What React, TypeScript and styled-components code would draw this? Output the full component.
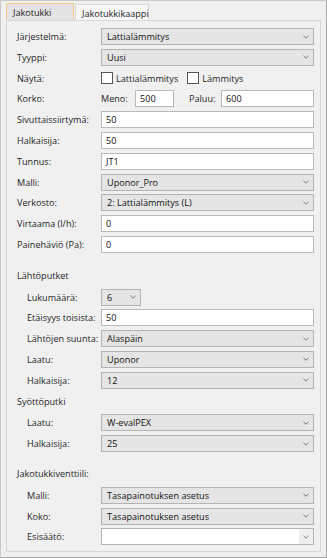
import React from "react";
import styled, { createGlobalStyle } from "styled-components";

const GlobalStyle = createGlobalStyle`
    html, body {
        margin: 0;
        padding: 0;
        background: #ffffff;
    }

    body {
        font-family: "Open Sans", "Noto Sans", sans-serif;
        font-size: 9.1px;
        color: #1e1e1e;
    }
`;

const Frame = styled.div`
    width: 327px;
    height: 558px;
    box-sizing: border-box;
    border: 1px solid #c9c9c9;
    border-right-color: #a8a8a8;
    border-bottom-color: #a8a8a8;
    background: #f0f0f0;
    padding: 2px 5px 5px 5px;
    display: flex;
    flex-direction: column;
`;

const TabBar = styled.div`
    display: flex;
    height: 17px;
    align-items: flex-end;
`;

const Tab = styled.div<{ $active?: boolean }>`
    box-sizing: border-box;
    height: ${(p) => (p.$active ? "17px" : "16px")};
    padding: 1px 6px 0;
    display: flex;
    align-items: center;
    background: ${(p) => (p.$active ? "#e3e3e3" : "#f7f7f7")};
    border: 1px solid ${(p) => (p.$active ? "#f3c98e" : "#d9d9d9")};
    border-bottom: none;
    margin-right: 1px;
    color: #1e1e1e;
    width: ${(p) => (p.$active ? "68px" : "74px")};
`;

const Panel = styled.div`
    flex: 1;
    box-sizing: border-box;
    border: 1px solid #d7d7d7;
    background: #f0f0f0;
    padding: 7px 6px 0 10px;
    display: flex;
    flex-direction: column;
    gap: 3.8px;
`;

const Row = styled.div`
    display: grid;
    grid-template-columns: 84px 1fr;
    height: 17px;
    align-items: center;
`;

const Label = styled.div<{ $indent?: boolean }>`
    padding-left: ${(p) => (p.$indent ? "10px" : "0")};
    white-space: nowrap;
    color: #262626;
`;

const Heading = styled.div<{ $space: number }>`
    height: 18px;
    line-height: 18px;
    margin-top: ${(p) => p.$space}px;
    color: #262626;
`;

const SelectBox = styled.div<{ $width?: number; $editable?: boolean }>`
    box-sizing: border-box;
    height: 17px;
    width: ${(p) => (p.$width ? `${p.$width}px` : "100%")};
    border: 1px solid #b4b4b4;
    background: ${(p) => (p.$editable ? "#ffffff" : "#e5e5e5")};
    display: flex;
    align-items: center;
    color: #111111;
`;

const SelectText = styled.span`
    flex: 1;
    padding-left: 5px;
    white-space: nowrap;
    overflow: hidden;
`;

const Arrow = styled.span<{ $shaded?: boolean }>`
    width: 14px;
    height: 100%;
    display: flex;
    align-items: center;
    justify-content: center;
    background: ${(p) => (p.$shaded ? "#efefef" : "transparent")};
`;

const TextBox = styled.div<{ $width?: number }>`
    box-sizing: border-box;
    height: 17px;
    ${(p) => (p.$width ? `width: ${p.$width}px; flex: none;` : "width: 100%; flex: 1;")}
    border: 1px solid #b9b9b9;
    background: #ffffff;
    padding-left: 4px;
    display: flex;
    align-items: center;
    color: #111111;
`;

const Inline = styled.div`
    display: flex;
    align-items: center;
`;

const Check = styled.span`
    box-sizing: border-box;
    width: 12px;
    height: 12px;
    border: 1px solid #555555;
    background: #ffffff;
    margin-right: 3px;
`;

const CheckLabel = styled.span`
    margin-right: 9px;
    white-space: nowrap;
`;

const FieldCaption = styled.span<{ $gap: number; $lead?: number }>`
    width: ${(p) => p.$gap}px;
    margin-left: ${(p) => p.$lead ?? 0}px;
    flex: none;
    white-space: nowrap;
`;

const Chevron = () => (
    <svg width="6" height="4" viewBox="0 0 6 4">
        <polyline points="0.5,0.8 3,3.2 5.5,0.8" fill="none" stroke="#7a7a7a" strokeWidth="1" />
    </svg>
);

const Select = ({ value, width, editable }: { value: string; width?: number; editable?: boolean }) => (
    <SelectBox $width={width} $editable={editable}>
        <SelectText>{value}</SelectText>
        <Arrow $shaded={editable}>
            <Chevron />
        </Arrow>
    </SelectBox>
);

const App = () => {
    return (
        <>
            <GlobalStyle />
            <Frame>
                <TabBar>
                    <Tab $active>Jakotukki</Tab>
                    <Tab>Jakotukkikaappi</Tab>
                </TabBar>
                <Panel>
                    <Row>
                        <Label>Järjestelmä:</Label>
                        <Select value="Lattialämmitys" />
                    </Row>
                    <Row>
                        <Label>Tyyppi:</Label>
                        <Select value="Uusi" />
                    </Row>
                    <Row>
                        <Label>Näytä:</Label>
                        <Inline>
                            <Check />
                            <CheckLabel>Lattialämmitys</CheckLabel>
                            <Check />
                            <CheckLabel>Lämmitys</CheckLabel>
                        </Inline>
                    </Row>
                    <Row>
                        <Label>Korko:</Label>
                        <Inline>
                            <FieldCaption $gap={34}>Meno:</FieldCaption>
                            <TextBox $width={39}>500</TextBox>
                            <FieldCaption $gap={32} $lead={15}>
                                Paluu:
                            </FieldCaption>
                            <TextBox>600</TextBox>
                        </Inline>
                    </Row>
                    <Row>
                        <Label>Sivuttaissiirtymä:</Label>
                        <TextBox>50</TextBox>
                    </Row>
                    <Row>
                        <Label>Halkaisija:</Label>
                        <TextBox>50</TextBox>
                    </Row>
                    <Row>
                        <Label>Tunnus:</Label>
                        <TextBox>JT1</TextBox>
                    </Row>
                    <Row>
                        <Label>Malli:</Label>
                        <Select value="Uponor_Pro" />
                    </Row>
                    <Row>
                        <Label>Verkosto:</Label>
                        <Select value="2: Lattialämmitys (L)" />
                    </Row>
                    <Row>
                        <Label>Virtaama (l/h):</Label>
                        <TextBox>0</TextBox>
                    </Row>
                    <Row>
                        <Label>Painehäviö (Pa):</Label>
                        <TextBox>0</TextBox>
                    </Row>

                    <Heading $space={10}>Lähtöputket</Heading>
                    <Row>
                        <Label $indent>Lukumäärä:</Label>
                        <Select value="6" width={40} />
                    </Row>
                    <Row>
                        <Label $indent>Etäisyys toisista:</Label>
                        <TextBox>50</TextBox>
                    </Row>
                    <Row>
                        <Label $indent>Lähtöjen suunta:</Label>
                        <Select value="Alaspäin" />
                    </Row>
                    <Row>
                        <Label $indent>Laatu:</Label>
                        <Select value="Uponor" />
                    </Row>
                    <Row>
                        <Label $indent>Halkaisija:</Label>
                        <Select value="12" />
                    </Row>

                    <Heading $space={0}>Syöttöputki</Heading>
                    <Row>
                        <Label $indent>Laatu:</Label>
                        <Select value="W-evalPEX" />
                    </Row>
                    <Row>
                        <Label $indent>Halkaisija:</Label>
                        <Select value="25" />
                    </Row>

                    <Heading $space={9}>Jakotukkiventtiili:</Heading>
                    <Row>
                        <Label $indent>Malli:</Label>
                        <Select value="Tasapainotuksen asetus" />
                    </Row>
                    <Row>
                        <Label $indent>Koko:</Label>
                        <Select value="Tasapainotuksen asetus" />
                    </Row>
                    <Row>
                        <Label $indent>Esisäätö:</Label>
                        <Select value="" editable />
                    </Row>
                </Panel>
            </Frame>
        </>
    );
};

export default App;
